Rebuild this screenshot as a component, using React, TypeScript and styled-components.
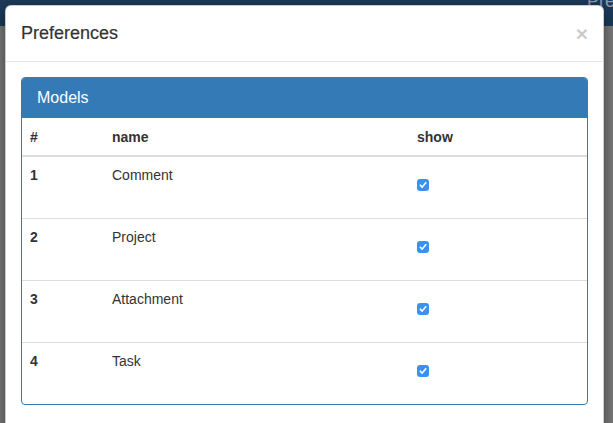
import React from "react";
import styled, { createGlobalStyle } from "styled-components";

const Global = createGlobalStyle`
  html, body { margin: 0; padding: 0; }
  body {
    font-family: "Liberation Sans", Arial, sans-serif;
    font-size: 14px;
    line-height: 20px;
    color: #333;
    background: #7b7b7b;
  }
`;

const Page = styled.div`
  position: relative;
  width: 613px;
  height: 423px;
  overflow: hidden;
  background: #7b7b7b;
`;

const Navbar = styled.div`
  height: 26px;
  background: #1c3a5a;
  display: flex;
  align-items: flex-start;
  padding-left: 587px;
  overflow: hidden;
`;

const Brand = styled.span`
  font-size: 18px;
  line-height: 20px;
  margin-top: -9px;
  white-space: nowrap;
  color: #8d9db1;
`;

const Modal = styled.div`
  position: absolute;
  top: 5px;
  left: 5px;
  width: 599px;
  box-sizing: border-box;
  background: #fff;
  border: 1px solid rgba(0, 0, 0, 0.2);
  border-radius: 6px;
  box-shadow: 0 5px 15px rgba(0, 0, 0, 0.5);
`;

const Header = styled.div`
  display: flex;
  align-items: flex-start;
  justify-content: space-between;
  padding: 15px;
  border-bottom: 1px solid #e5e5e5;
`;

const Title = styled.h4`
  margin: 0;
  font-size: 18px;
  line-height: 25px;
  font-weight: 500;
  color: #333;
  -webkit-text-stroke: 0.2px #333;
`;

const Close = styled.button`
  border: 0;
  background: transparent;
  padding: 0;
  margin-top: 2px;
  font-family: "Liberation Sans", Arial, sans-serif;
  font-size: 21px;
  font-weight: bold;
  line-height: 1;
  color: #000;
  opacity: 0.2;
  cursor: pointer;
`;

const Body = styled.div`
  padding: 15px 15px 24px;
`;

const Panel = styled.div`
  border: 1px solid #337ab7;
  border-radius: 4px;
  overflow: hidden;
`;

const PanelHeading = styled.div`
  background: #337ab7;
  color: #fff;
  padding: 10px 15px;
  font-size: 16px;
  line-height: 20px;
`;

const Table = styled.table`
  width: 100%;
  border-collapse: collapse;
  border-spacing: 0;
`;

const Th = styled.th<{ $w: number }>`
  width: ${(p) => p.$w}px;
  text-align: left;
  font-weight: bold;
  padding: 9px 8px 8px;
  line-height: 20px;
  vertical-align: bottom;
  border-bottom: 2px solid #ddd;
`;

const Td = styled.td<{ $bold?: boolean }>`
  padding: 8px;
  line-height: 20px;
  vertical-align: top;
  border-top: 1px solid #ddd;
  font-weight: ${(p) => (p.$bold ? "bold" : "normal")};
`;

const CheckWrap = styled.div`
  height: 45px;
  padding-top: 14px;
  box-sizing: border-box;
`;

const Check = styled.span`
  display: flex;
  align-items: center;
  justify-content: center;
  width: 12px;
  height: 12px;
  border-radius: 3px;
  background: #3b90f3;
`;

const rows = [
  { id: 1, name: "Comment" },
  { id: 2, name: "Project" },
  { id: 3, name: "Attachment" },
  { id: 4, name: "Task" },
];

export default function App() {
  return (
    <Page>
      <Global />
      <Navbar>
        <Brand>Preferences</Brand>
      </Navbar>
      <Modal>
        <Header>
          <Title>Preferences</Title>
          <Close aria-label="Close">×</Close>
        </Header>
        <Body>
          <Panel>
            <PanelHeading>Models</PanelHeading>
            <Table>
              <thead>
                <tr>
                  <Th $w={66}>#</Th>
                  <Th $w={289}>name</Th>
                  <Th $w={162}>show</Th>
                </tr>
              </thead>
              <tbody>
                {rows.map((r) => (
                  <tr key={r.id}>
                    <Td $bold>{r.id}</Td>
                    <Td>{r.name}</Td>
                    <Td>
                      <CheckWrap>
                        <Check>
                          <svg width="10" height="10" viewBox="0 0 10 10">
                            <path
                              d="M2.3 5.2 L4.2 7.1 L7.8 2.8"
                              fill="none"
                              stroke="#fff"
                              strokeWidth="1.6"
                              strokeLinecap="round"
                              strokeLinejoin="round"
                            />
                          </svg>
                        </Check>
                      </CheckWrap>
                    </Td>
                  </tr>
                ))}
              </tbody>
            </Table>
          </Panel>
        </Body>
      </Modal>
    </Page>
  );
}
